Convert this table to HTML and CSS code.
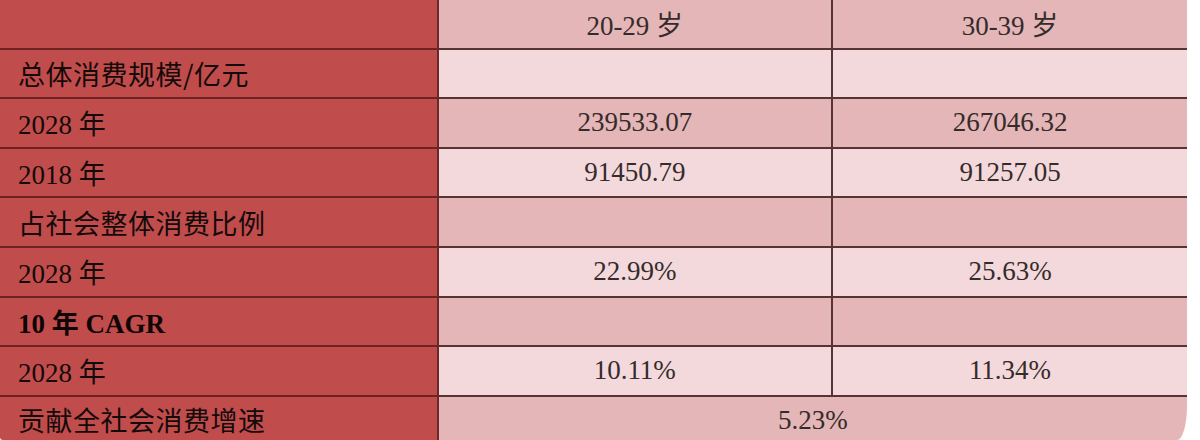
FILE: index.html
```html
<!DOCTYPE html>
<html lang="zh-CN">
<head>
<meta charset="utf-8">
<title>消费规模</title>
<link rel="stylesheet" href="styles.css">
</head>
<body>
<div class="sheet">
  <div class="row dark">
    <div class="cell label"></div>
    <div class="cell val">20-29 岁</div>
    <div class="cell val last">30-39 岁</div>
  </div>
  <div class="row light">
    <div class="cell label cjk">总体消费规模/亿元</div>
    <div class="cell val"></div>
    <div class="cell val last"></div>
  </div>
  <div class="row dark">
    <div class="cell label">2028 年</div>
    <div class="cell val">239533.07</div>
    <div class="cell val last">267046.32</div>
  </div>
  <div class="row light">
    <div class="cell label">2018 年</div>
    <div class="cell val">91450.79</div>
    <div class="cell val last">91257.05</div>
  </div>
  <div class="row dark">
    <div class="cell label cjk">占社会整体消费比例</div>
    <div class="cell val"></div>
    <div class="cell val last"></div>
  </div>
  <div class="row light">
    <div class="cell label">2028 年</div>
    <div class="cell val">22.99%</div>
    <div class="cell val last">25.63%</div>
  </div>
  <div class="row dark">
    <div class="cell label bold">10 年 CAGR</div>
    <div class="cell val"></div>
    <div class="cell val last"></div>
  </div>
  <div class="row light">
    <div class="cell label">2028 年</div>
    <div class="cell val">10.11%</div>
    <div class="cell val last">11.34%</div>
  </div>
  <div class="row dark final">
    <div class="cell label cjk">贡献全社会消费增速</div>
    <div class="cell val span">5.23%</div>
  </div>
</div>
</body>
</html>
```

FILE: styles.css
```css
html, body {
  margin: 0;
  padding: 0;
  background: #ffffff;
  overflow: hidden;
  height: 440px;
}

.sheet {
  width: 1187px;
  height: 440px;
  overflow: hidden;
  border-bottom-right-radius: 10px 34px;
  border-bottom-left-radius: 3px 3px;
  display: flex;
  flex-direction: column;
  font-family: "Liberation Serif", "Noto Sans CJK SC", serif;
  font-size: 27px;
}

.row {
  display: grid;
  grid-template-columns: 438.5px 394.5px 354px;
  height: 49.6px;
  flex: none;
}

.row.final {
  flex: 1 1 auto;
  grid-template-columns: 438.5px 748.5px;
}

.cell {
  box-sizing: border-box;
  display: flex;
  align-items: center;
  border-bottom: 2px solid #563434;
  border-right: 2px solid #563434;
  min-width: 0;
  white-space: nowrap;
}

.cell.last {
  border-right: none;
}

.label {
  background: #c14c4c;
  color: #140a0a;
  padding-left: 18px;
  border-bottom-color: #6e2222;
  border-right-color: #6a2828;
}

.label.cjk {
  font-family: "Noto Sans CJK SC", sans-serif;
  font-size: 27px;
  font-weight: 400;
  letter-spacing: 0.5px;
}

.label.bold {
  font-weight: 700;
  color: #0e0505;
}

.val {
  justify-content: center;
  color: #352b2b;
}

.dark .val {
  background: #e4b6b7;
}

.light .val {
  background: #f3d9db;
}

.final .cell {
  border-bottom: none;
  align-items: flex-start;
  padding-top: 10px;
  line-height: 26px;
}

.final .val.span {
  border-right: none;
}
```
